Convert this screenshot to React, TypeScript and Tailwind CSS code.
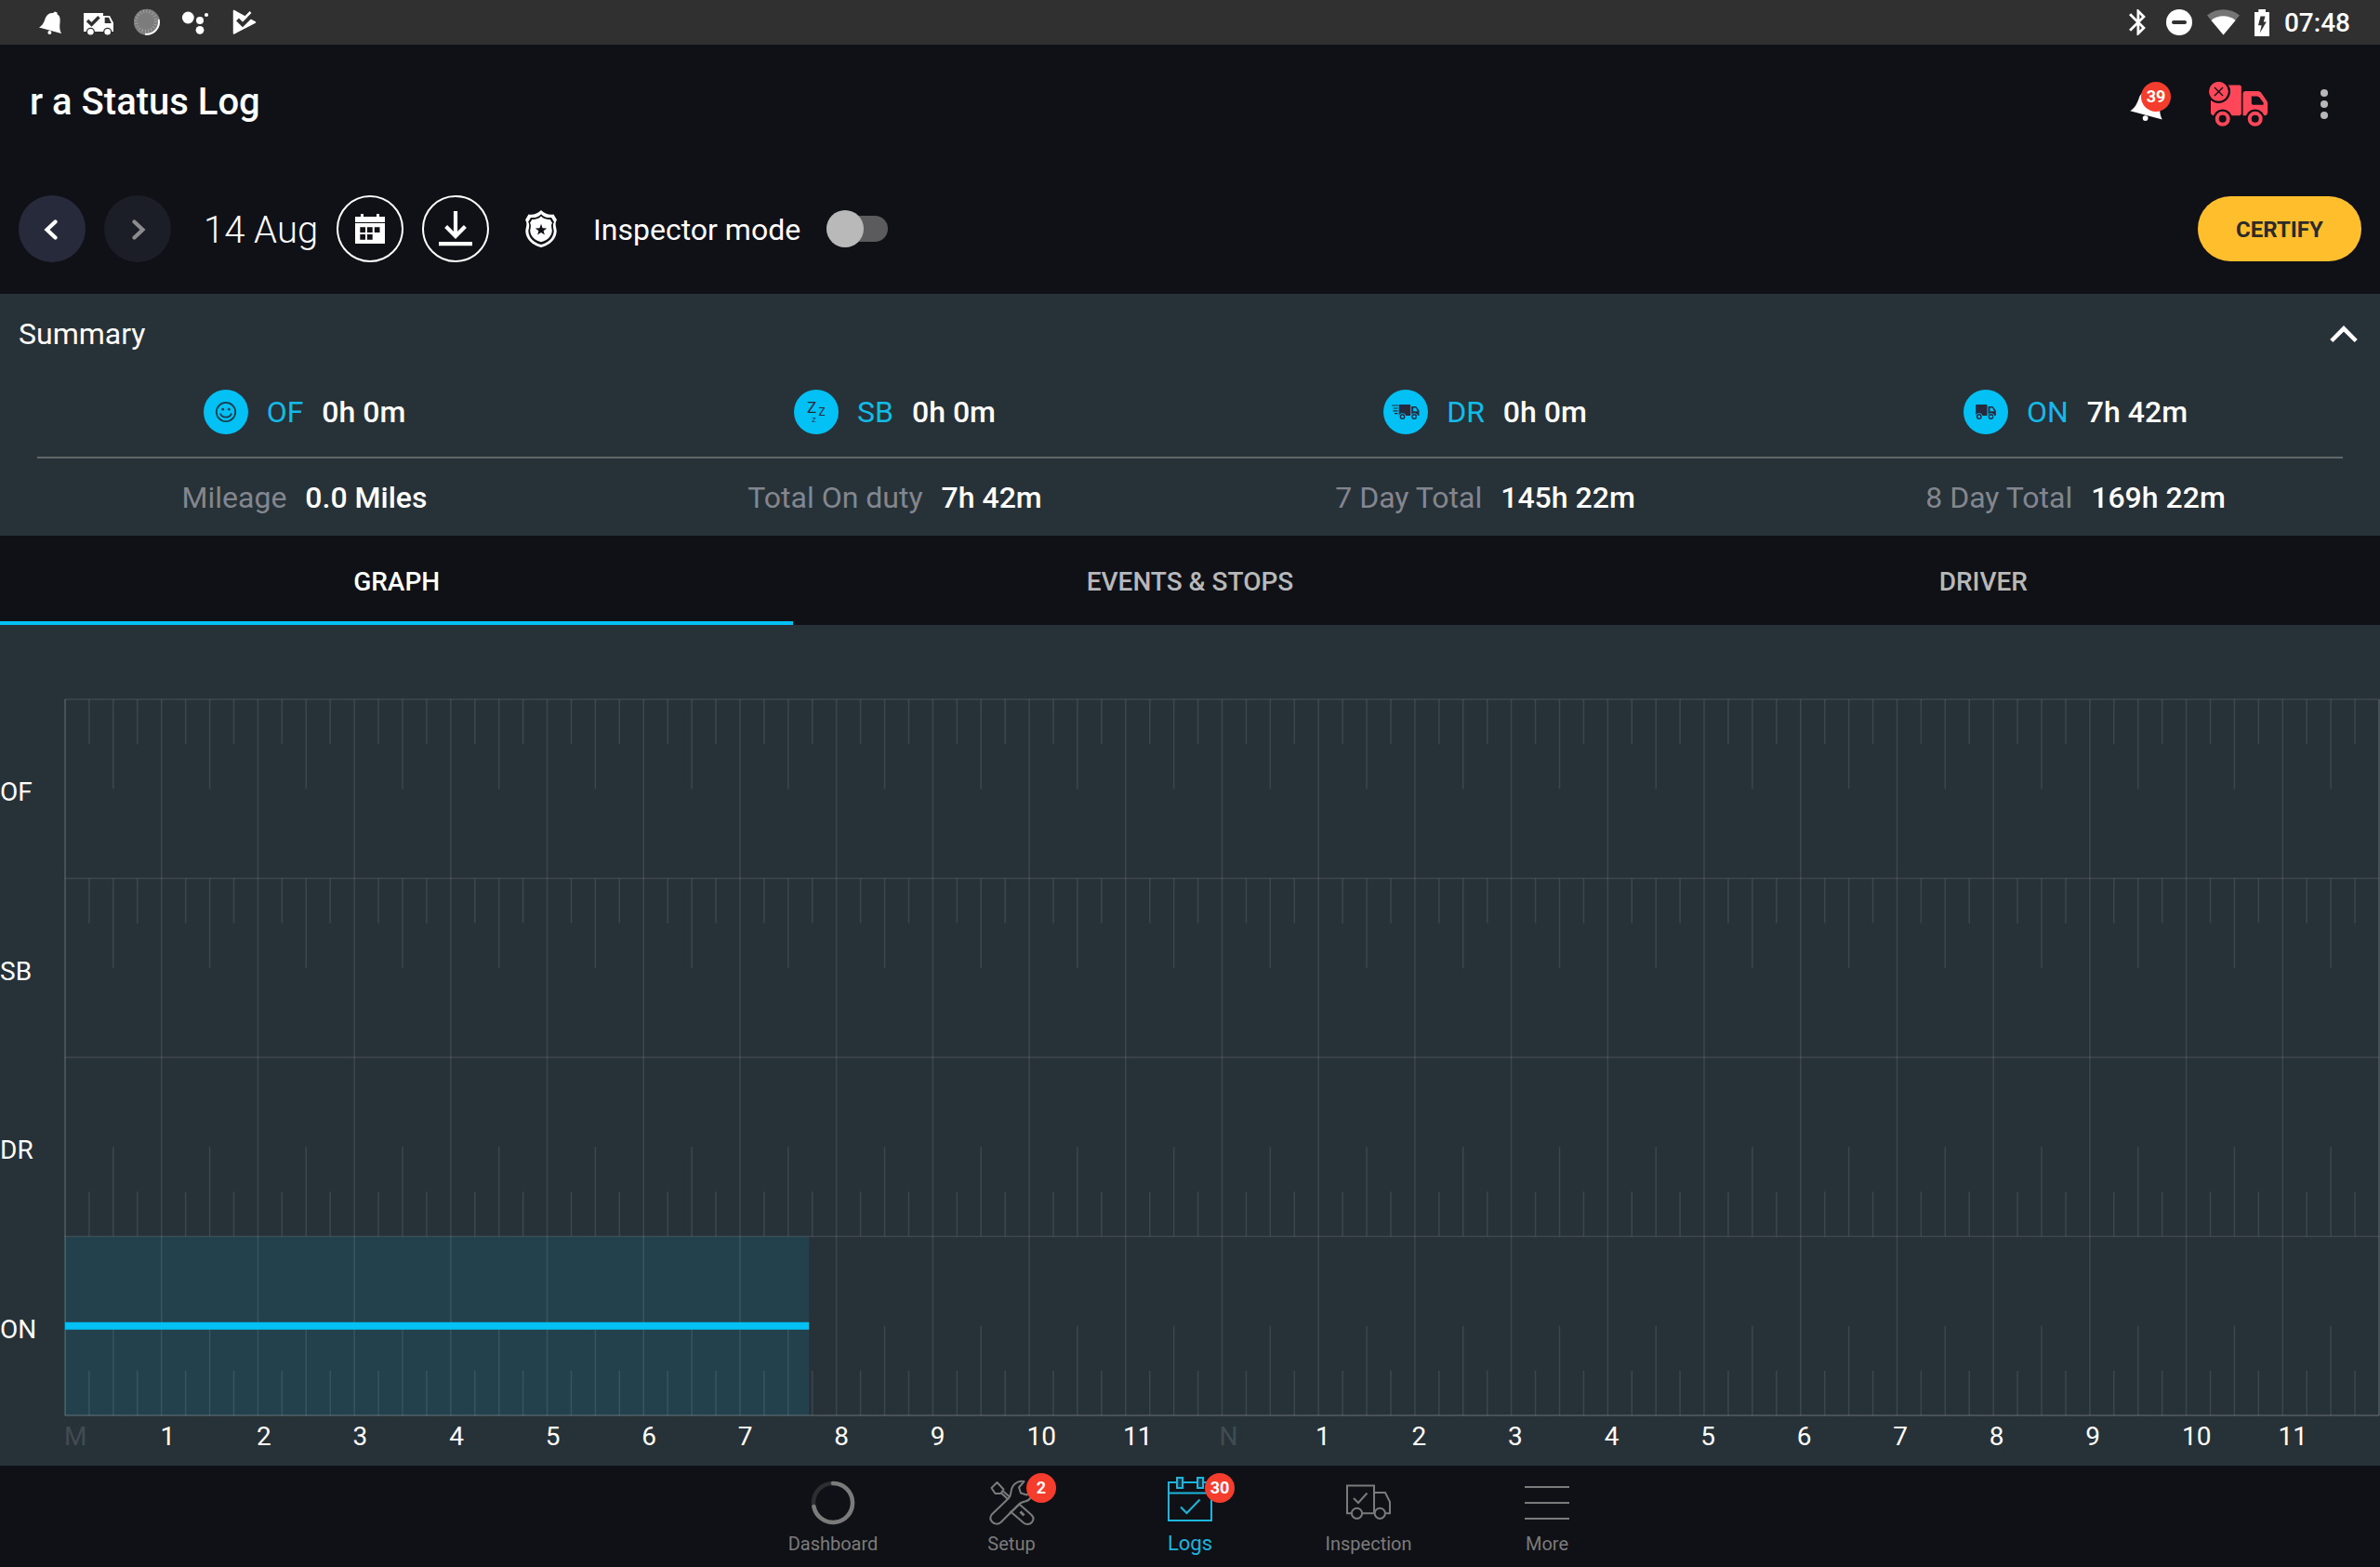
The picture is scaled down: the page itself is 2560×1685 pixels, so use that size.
import React, { useState } from "react";

interface IconProps {
  className?: string;
}

const BELL_BODY =
  "M0 17.5C4.5 15 5.5 11 7 7C8.5 3.5 12 1.5 15 2L17 0.6L19.6 1.4L19.5 3.2C22.5 5 23 8 22.5 12C22 17 22 20 24 24Z";

const BellIcon: React.FC<IconProps> = ({ className }) => (
  <svg viewBox="0 0 24 25" className={className} fill="currentColor" aria-hidden="true">
    <path d={BELL_BODY} />
    <circle cx="11.4" cy="23" r="2" />
  </svg>
);

/* Status bar icons */

const StatusTruckIcon: React.FC = () => (
  <svg viewBox="-2 -8 36 36" className="size-9" fill="none" aria-hidden="true">
    <path d="M0 0H21V3H28L32 10.5V20H0Z" fill="#fff" />
    <path d="M22.7 4.8H27L29.8 11H22.7Z" fill="#303030" />
    <path d="M4 8L8.5 12.3L16.5 4.3" stroke="#303030" strokeWidth="3.4" />
    <circle cx="7.4" cy="20.3" r="4.6" fill="#303030" />
    <circle cx="25.7" cy="20.3" r="4.6" fill="#303030" />
    <circle cx="7.4" cy="20.3" r="3.3" fill="#fff" />
    <circle cx="25.7" cy="20.3" r="3.3" fill="#fff" />
  </svg>
);

const StatusDialIcon: React.FC = () => (
  <svg viewBox="0 0 36 36" className="size-9" fill="none" aria-hidden="true">
    <circle cx="18" cy="17.8" r="14" fill="#858585" />
    <path d="M30.6 15A13 13 0 0 1 16 30.6" stroke="#fff" strokeWidth="2" />
    <circle cx="17" cy="16.8" r="12.8" fill="#7c7c7c" />
    <circle cx="17" cy="16.8" r="10.5" stroke="#a6a6a6" strokeWidth="3.4" strokeDasharray="0.9 2.4" />
  </svg>
);

const StatusDotsIcon: React.FC = () => (
  <svg viewBox="0 0 36 36" className="size-9" fill="#fff" aria-hidden="true">
    <circle cx="10.3" cy="13" r="6.4" />
    <circle cx="23" cy="16" r="4" />
    <circle cx="30" cy="10" r="2.1" />
    <circle cx="23" cy="26.3" r="4.4" />
  </svg>
);

const StatusPlayIcon: React.FC = () => (
  <svg viewBox="0 0 36 36" className="size-9" fill="none" aria-hidden="true">
    <path d="M7.5 5.5L30.5 18L7.5 30Z" fill="#fff" stroke="#fff" strokeWidth="1.5" strokeLinejoin="round" />
    <path d="M11.5 15L17 20.4L30 7.5" stroke="#303030" strokeWidth="4" />
    <path d="M17.5 15.2L25.5 7" stroke="#fff" strokeWidth="2.6" />
  </svg>
);

const BluetoothIcon: React.FC = () => (
  <svg viewBox="5 2 17 20" className="h-7 w-6" fill="#fff" aria-hidden="true">
    <path d="M17.71 7.71L12 2h-1v7.59L6.41 5 5 6.41 10.59 12 5 17.59 6.41 19 11 14.41V22h1l5.71-5.71-4.3-4.29 4.3-4.29zM13 5.83l1.88 1.88L13 9.59V5.83zm1.88 10.46L13 18.17v-3.76l1.88 1.88z" />
  </svg>
);

const DndIcon: React.FC = () => (
  <svg viewBox="0 0 28 28" className="size-7" aria-hidden="true">
    <circle cx="14" cy="14" r="14" fill="#fff" />
    <rect x="6" y="12" width="16" height="4" rx="2" fill="#303030" />
  </svg>
);

const WifiIcon: React.FC = () => (
  <svg viewBox="0 0 35 28" className="h-7 w-[35px]" aria-hidden="true">
    <path d="M0 6.5C10 -2 25 -2 35 6.5L17.5 27.5Z" fill="#757575" />
    <path d="M4.5 12C11 5.8 24 5.8 30.5 12L17.5 27.5Z" fill="#fff" />
  </svg>
);

const BatteryIcon: React.FC = () => (
  <svg viewBox="0 0 16 29" className="h-[29px] w-4" aria-hidden="true">
    <path d="M4.3 0H12V3H16V29H0V3H4.3Z" fill="#fff" />
    <path d="M6.5 7.5H11.5L9.8 13.5H12.8L5.8 25.5L7.6 17.2H4Z" fill="#303030" />
  </svg>
);

/* Header icons */

const TruckAlertIcon: React.FC = () => (
  <svg viewBox="0 0 64 48" className="h-12 w-16" fill="none" aria-hidden="true">
    <path d="M2 3.5H32.5Q34.8 3.5 34.8 5.5V34Q34.8 36.3 32.5 36.3H4L2 34Z" fill="#ff4759" />
    <path d="M36.6 12.5Q36.6 10 39 10H53Q55 10 56 11.5L62.3 20.5Q63 21.5 63 23V32.5Q63 36.3 60 36.3H36.6Z" fill="#ff4759" />
    <path d="M45.8 15.5H51.5Q53.5 15.5 54.6 17L58.6 22.5V24.8H47.5Q45.8 24.8 45.8 23Z" fill="#101116" />
    <circle cx="10.4" cy="10.3" r="12.6" fill="#101116" />
    <circle cx="10.4" cy="10.3" r="10.4" fill="#ff4759" />
    <path d="M6 6L15 15M15 6L6 15" stroke="#101116" strokeWidth="1.4" />
    <circle cx="14.7" cy="39.8" r="10.4" fill="#101116" />
    <circle cx="49.7" cy="39.8" r="10.4" fill="#101116" />
    <circle cx="14.7" cy="39.8" r="6" stroke="#ff4759" strokeWidth="4" />
    <circle cx="49.7" cy="39.8" r="6" stroke="#ff4759" strokeWidth="4" />
  </svg>
);

const CalendarIcon: React.FC = () => (
  <svg viewBox="0 0 32 32" className="size-8" aria-hidden="true">
    <path d="M0 3H6V0H9V3H23V0H26V3H32V32H0Z" fill="#fff" />
    <path d="M0 9H32V10H0Z M5.3 14.3H11V20H5.3Z M13 14.3H18.7V20H13Z M20.8 14.3H26.5V20H20.8Z M5.3 22H11V27.7H5.3Z M13 22H18.7V27.7H13Z" fill="#101116" />
  </svg>
);

const DownloadIcon: React.FC = () => (
  <svg viewBox="0 0 36 38" className="h-[38px] w-9" fill="none" stroke="#fff" strokeWidth="4.2" aria-hidden="true">
    <path d="M18 0V27M7.6 16.6L18 27L28.4 16.6M0 35.2H36" />
  </svg>
);

const SHIELD =
  "M17 0C13.5 4 8 5.4 3.5 4.5L0 10.5C2.6 14 .8 18 .3 22C.3 31 8 38 17 40C26 38 33.7 31 33.7 22C33.2 18 31.4 14 34 10.5L30.5 4.5C26 5.4 20.5 4 17 0Z";

const ShieldIcon: React.FC = () => (
  <svg viewBox="0 0 34 40" className="h-10 w-[34px]" aria-hidden="true">
    <path d={SHIELD} fill="#fff" />
    <path d={SHIELD} fill="#101116" transform="translate(3.1 4.2) scale(.82)" />
    <path d={SHIELD} fill="#fff" transform="translate(5 6.6) scale(.706 .69)" />
    <path d="M17 14.8L18.6 19.2L23.2 19.4L19.6 22.2L20.9 26.6L17 24.1L13.1 26.6L14.4 22.2L10.8 19.4L15.4 19.2Z" fill="#101116" />
  </svg>
);

/* Duty icons */

const SmileIcon: React.FC = () => (
  <svg viewBox="0 0 48 48" className="size-12" fill="none" stroke="#1c3c4c" strokeWidth="1.8" aria-hidden="true">
    <circle cx="24" cy="24" r="10.2" />
    <path d="M18 25.5C19.5 31 28.5 31 30 25.5" />
    <circle cx="20.7" cy="21.2" r="1.4" fill="#1c3c4c" stroke="none" />
    <circle cx="27.3" cy="21.2" r="1.4" fill="#1c3c4c" stroke="none" />
  </svg>
);

const SleepIcon: React.FC = () => (
  <svg viewBox="0 0 48 48" className="size-12" fill="#222b3e" aria-hidden="true">
    <text x="14" y="25" fontSize="17">Z</text>
    <text x="26.5" y="28" fontSize="12">Z</text>
    <text x="19" y="35" fontSize="8">Z</text>
  </svg>
);

const TruckShape: React.FC = () => (
  <>
    <path d="M.5 0H11.5Q12.5 0 12.5 1V12H0V.5Z" fill="#272a3e" />
    <path d="M13.5 2H18.5L21.8 6.5V12H13.5Z" fill="#272a3e" />
    <path d="M15.5 3.6H18L20.2 7.2H15.5Z" fill="#03c1f4" />
    <circle cx="3.8" cy="13" r="3.7" fill="#03c1f4" />
    <circle cx="16.5" cy="13" r="3.7" fill="#03c1f4" />
    <circle cx="3.8" cy="13" r="2.2" fill="none" stroke="#272a3e" strokeWidth="1.4" />
    <circle cx="16.5" cy="13" r="2.2" fill="none" stroke="#272a3e" strokeWidth="1.4" />
  </>
);

const DrivingIcon: React.FC = () => (
  <svg viewBox="0 0 48 48" className="size-12" aria-hidden="true">
    <path d="M9 17H16M10.5 20H15.5M10.5 22.8H15.5M12 25.6H15.5" stroke="#272a3e" strokeWidth="1.2" />
    <g transform="translate(16.7 16)">
      <TruckShape />
    </g>
  </svg>
);

const OnDutyIcon: React.FC = () => (
  <svg viewBox="0 0 48 48" className="size-12" aria-hidden="true">
    <g transform="translate(13 16)">
      <TruckShape />
    </g>
  </svg>
);

/* Bottom navigation icons */

const DashboardIcon: React.FC = () => (
  <svg viewBox="0 0 48 48" className="size-12" fill="none" strokeWidth="4.5" aria-hidden="true">
    <circle cx="24" cy="24" r="21" stroke="#2d2e32" />
    <path d="M24 3A21 21 0 1 1 3.4 28" stroke="#7b7b7b" strokeLinecap="round" />
  </svg>
);

const SetupIcon: React.FC = () => (
  <svg viewBox="0 0 48 48" className="size-12 overflow-visible" fill="none" stroke="currentColor" strokeWidth="2" strokeLinejoin="round" aria-hidden="true">
    <path d="M8.5 2L2.5 8L6.5 14H12.5L15.5 9.5Z" />
    <path d="M13 13.5L20.5 20.5M15 11.5L22.5 18" />
    <path d="M2.8 36.5L21 19C24.5 15.5 22 12 25.5 6C28 2 33 0 37.5 1L32 7.5L34 13.5L40.5 15.5L46.5 10C47.5 16 44 21.5 38.5 22.5C34 23.5 32.5 24.5 30.5 27L12.5 45C9.5 47.5 5.5 47 3.2 44.5C1 42 .8 39 2.8 36.5Z" />
    <path d="M21.5 36L32.5 25.5L45.5 37C48 39.5 48 42.5 45.8 45C43.5 47.5 39.5 47.5 37 45.5L22.5 33" />
    <path d="M33.5 33.5L37.5 37.5" strokeWidth="3" />
  </svg>
);

const LogsIcon: React.FC = () => (
  <svg viewBox="0 0 48 48" className="size-12 overflow-visible" fill="none" stroke="currentColor" strokeWidth="2" aria-hidden="true">
    <path d="M1 2H47V43H1ZM1 13.5H47" />
    <path d="M10 -3H16V8H10ZM32 -3H38V8H32Z" fill="#0c3947" />
    <path d="M14 28.5L20.5 35L34.5 20.5" />
  </svg>
);

const InspectionIcon: React.FC = () => (
  <svg viewBox="0 0 48 48" className="size-12" fill="none" stroke="currentColor" strokeWidth="2" aria-hidden="true">
    <path d="M5.5 35.3H1V5.5H30V35.3H17.5M30 13H42L47 23V35.3H42.3M30 35.3H30.3" />
    <circle cx="11.5" cy="35.3" r="5.6" />
    <circle cx="36.3" cy="35.3" r="5.6" />
    <path d="M8 19L13 24L22.5 13.5" />
  </svg>
);

const MoreIcon: React.FC = () => (
  <svg viewBox="0 0 48 48" className="size-12" fill="none" stroke="currentColor" strokeWidth="2" aria-hidden="true">
    <path d="M0 7H48M0 24H48M0 41H48" />
  </svg>
);

const duties = [
  { code: "OF", time: "0h 0m", icon: <SmileIcon /> },
  { code: "SB", time: "0h 0m", icon: <SleepIcon /> },
  { code: "DR", time: "0h 0m", icon: <DrivingIcon /> },
  { code: "ON", time: "7h 42m", icon: <OnDutyIcon /> },
];

const totals = [
  { label: "Mileage", value: "0.0 Miles" },
  { label: "Total On duty", value: "7h 42m" },
  { label: "7 Day Total", value: "145h 22m" },
  { label: "8 Day Total", value: "169h 22m" },
];

const tabs = ["GRAPH", "EVENTS & STOPS", "DRIVER"];

const hours = [
  "M", "1", "2", "3", "4", "5", "6", "7", "8", "9", "10", "11",
  "N", "1", "2", "3", "4", "5", "6", "7", "8", "9", "10", "11",
];

const navItems = [
  { label: "Dashboard", icon: <DashboardIcon /> },
  { label: "Setup", icon: <SetupIcon />, badge: 2 },
  { label: "Logs", icon: <LogsIcon />, badge: 30 },
  { label: "Inspection", icon: <InspectionIcon /> },
  { label: "More", icon: <MoreIcon /> },
];

// Minutes since midnight, row is an index into duties
const segments = [{ row: 3, from: 0, to: 463 }];

const pct = (n: number) => `${n * 100}%`;

const Badge: React.FC<{ count: number }> = ({ count }) => (
  <span className="flex size-8 items-center justify-center rounded-full bg-[#f43d2c] text-lg font-bold text-white">
    {count}
  </span>
);

const DutyChart: React.FC = () => {
  const quarters = Array.from({ length: 96 }, (_, i) => i);

  return (
    <svg className="min-w-0 flex-1 overflow-visible" role="img" aria-label="Duty status graph">
      {segments.map((s) => (
        <rect
          key={s.from}
          x={pct(s.from / 1440)}
          y={pct(s.row / 4)}
          width={pct((s.to - s.from) / 1440)}
          height="25%"
          fill="#03c1f4"
          fillOpacity="0.11"
        />
      ))}
      <g stroke="#fff" strokeOpacity="0.1" strokeWidth="1.5">
        {[0, 1, 2, 3].map((r) => (
          <line key={r} x1="0" x2="100%" y1={pct(r / 4)} y2={pct(r / 4)} />
        ))}
        {quarters.map((q) => {
          const x = pct(q / 96);
          if (q === 0) return null;
          if (q % 4 === 0) return <line key={q} x1={x} x2={x} y1="0" y2="100%" />;
          const len = q % 2 === 0 ? 0.125 : 0.0625;
          // Off-duty rows hang their ticks from the top, on-duty rows stand them on the bottom
          return [0, 1, 2, 3].map((r) => (
            <line
              key={`${q}-${r}`}
              x1={x}
              x2={x}
              y1={pct(r < 2 ? r / 4 : (r + 1) / 4 - len)}
              y2={pct(r < 2 ? r / 4 + len : (r + 1) / 4)}
            />
          ));
        })}
      </g>
      <g stroke="#fff" strokeOpacity="0.15" strokeWidth="2">
        <line x1="0" x2="0" y1="0" y2="100%" />
        <line x1="100%" x2="100%" y1="0" y2="100%" />
        <line x1="0" x2="100%" y1="100%" y2="100%" />
      </g>
      {segments.map((s) => (
        <line
          key={s.from}
          x1={pct(s.from / 1440)}
          x2={pct(s.to / 1440)}
          y1={pct(s.row / 4 + 0.125)}
          y2={pct(s.row / 4 + 0.125)}
          stroke="#03c1f4"
          strokeWidth="8"
        />
      ))}
    </svg>
  );
};

export default function App() {
  const [activeTab, setActiveTab] = useState("GRAPH");
  const [inspector, setInspector] = useState(false);
  const [open, setOpen] = useState(true);

  return (
    <div className="flex min-h-screen flex-col bg-[#101116] font-['Roboto',sans-serif] text-white">
      {/* System status bar */}
      <div className="flex h-12 items-center justify-between bg-[#303030] pr-8 pl-9">
        <div className="flex items-center gap-4">
          <div className="flex size-9 items-center justify-center">
            <BellIcon className="h-[25px] w-6" />
          </div>
          <StatusTruckIcon />
          <StatusDialIcon />
          <StatusDotsIcon />
          <StatusPlayIcon />
        </div>
        <div className="flex items-center gap-4">
          <BluetoothIcon />
          <DndIcon />
          <WifiIcon />
          <BatteryIcon />
          <span className="pt-0.5 text-[28px] leading-9 font-medium">07:48</span>
        </div>
      </div>

      {/* App bar */}
      <header className="flex h-32 items-center justify-between pr-14 pl-8">
        <h1 className="pb-1 text-[40px] leading-12 font-medium">r a Status Log</h1>
        <div className="flex items-center gap-[50px]">
          <button type="button" aria-label="Notifications" className="relative">
            <BellIcon className="h-9 w-[35px]" />
            <span className="absolute -top-1.5 left-3">
              <Badge count={39} />
            </span>
          </button>
          <button type="button" aria-label="Vehicle disconnected">
            <TruckAlertIcon />
          </button>
          <button type="button" aria-label="More options" className="flex flex-col gap-1 pl-1.5">
            <span className="size-2 rounded-full bg-[#b8b8ba]" />
            <span className="size-2 rounded-full bg-[#b8b8ba]" />
            <span className="size-2 rounded-full bg-[#b8b8ba]" />
          </button>
        </div>
      </header>

      {/* Day controls */}
      <div className="flex h-[140px] items-center gap-5 px-5">
        <button type="button" aria-label="Previous day" className="size-[72px] rounded-full bg-[#272a3a]">
          <svg viewBox="0 0 72 72" fill="none" stroke="#fff" strokeWidth="4.2" strokeLinecap="round">
            <path d="M39.5 28.5L30.5 37L39.5 45.5" />
          </svg>
        </button>
        <button type="button" aria-label="Next day" disabled className="size-[72px] rounded-full bg-[#1b1d27]">
          <svg viewBox="0 0 72 72" fill="none" stroke="#8c8c8f" strokeWidth="4.2" strokeLinecap="round">
            <path d="M32.5 28.5L41.5 37L32.5 45.5" />
          </svg>
        </button>
        <span className="ml-[15px] pt-1 text-[40px] leading-12 font-light">14 Aug</span>
        <button type="button" aria-label="Pick a date" className="flex size-[72px] items-center justify-center rounded-full border-2 border-white">
          <CalendarIcon />
        </button>
        <button type="button" aria-label="Download" className="flex size-[72px] items-center justify-center rounded-full border-2 border-white">
          <DownloadIcon />
        </button>
        <div className="flex size-[72px] items-center justify-center">
          <ShieldIcon />
        </div>
        <label htmlFor="inspector" className="pt-0.5 text-[32px] leading-10">Inspector mode</label>
        <input
          id="inspector"
          type="checkbox"
          role="switch"
          checked={inspector}
          onChange={(e) => setInspector(e.target.checked)}
          className="relative ml-2 h-10 w-[66px] appearance-none before:absolute before:inset-x-0 before:top-1.5 before:h-7 before:rounded-full before:bg-[#5b5b5e] after:absolute after:top-0 after:left-0 after:size-10 after:rounded-full after:bg-[#b9b9b9] checked:after:left-[26px]"
        />
        <button type="button" className="ml-auto h-[70px] w-44 rounded-full bg-[#ffbf2c] pt-0.5 text-2xl font-bold text-[#2c2b29]">
          CERTIFY
        </button>
      </div>

      {/* Summary */}
      <section className="bg-[#273238]">
        <button
          type="button"
          onClick={() => setOpen(!open)}
          aria-expanded={open}
          className="flex h-[86px] w-full items-center justify-between pr-6 pl-5 text-[32px] leading-10"
        >
          Summary
          <svg viewBox="0 0 30 20" className={`h-5 w-[30px] ${open ? "" : "rotate-180"}`} fill="none" stroke="#fff" strokeWidth="4.5" aria-hidden="true">
            <path d="M1.8 17.5L15 4.3L28.2 17.5" />
          </svg>
        </button>
        {open && (
          <div className="h-[174px]">
            <div className="grid h-[89px] grid-cols-4 px-2.5 pt-[17px]">
              {duties.map((d) => (
                <div key={d.code} className="flex h-12 items-center justify-center gap-5 text-[32px] leading-10">
                  <span className="rounded-full bg-[#03c1f4]">{d.icon}</span>
                  <span className="text-[#12bbe8]">{d.code}</span>
                  <span className="font-medium">{d.time}</span>
                </div>
              ))}
            </div>
            <div className="mx-10 h-0.5 bg-[#626769]" />
            <div className="grid grid-cols-4 px-2.5 pt-[22px]">
              {totals.map((t) => (
                <div key={t.label} className="flex justify-center gap-5 text-[32px] leading-10">
                  <span className="text-[#84868f]">{t.label}</span>
                  <span className="font-medium">{t.value}</span>
                </div>
              ))}
            </div>
          </div>
        )}
      </section>

      {/* Tabs */}
      <div role="tablist" className="grid h-24 grid-cols-3">
        {tabs.map((tab) => (
          <button
            key={tab}
            type="button"
            role="tab"
            aria-selected={activeTab === tab}
            onClick={() => setActiveTab(tab)}
            className={`border-y-4 border-t-transparent pt-1 text-[28px] leading-9 font-medium ${
              activeTab === tab ? "border-b-[#03c1f4] text-white" : "border-b-transparent text-[#b7b8b9]"
            }`}
          >
            {tab}
          </button>
        ))}
      </div>

      {/* Graph */}
      <main className="flex flex-1 flex-col bg-[#273238] pt-20">
        <div className="flex min-h-[480px] flex-1 pr-px">
          <div className="flex w-[70px] flex-col text-[28px] leading-8">
            {duties.map((d) => (
              <div key={d.code} className="flex flex-1 items-center pt-2">{d.code}</div>
            ))}
          </div>
          <DutyChart />
        </div>
        <div className="grid h-[54px] grid-cols-24 pt-[7px] pr-1.5 pl-[69px] text-[28px] leading-8">
          {hours.map((h, i) => (
            <span key={i} className={i % 12 === 0 ? "text-[#414b50]" : ""}>{h}</span>
          ))}
        </div>
      </main>

      {/* Bottom navigation */}
      <nav className="flex h-[109px] justify-center">
        {navItems.map((item) => (
          <a
            key={item.label}
            href="#"
            className={`flex w-48 flex-col items-center gap-1.5 pt-4 ${
              item.label === "Logs" ? "text-[22px] leading-7 text-[#1cb5de]" : "text-xl leading-7 text-[#7b7b7b]"
            }`}
          >
            <span className="relative">
              {item.icon}
              {item.badge && (
                <span className="absolute -top-2 left-10">
                  <Badge count={item.badge} />
                </span>
              )}
            </span>
            {item.label}
          </a>
        ))}
      </nav>
    </div>
  );
}
